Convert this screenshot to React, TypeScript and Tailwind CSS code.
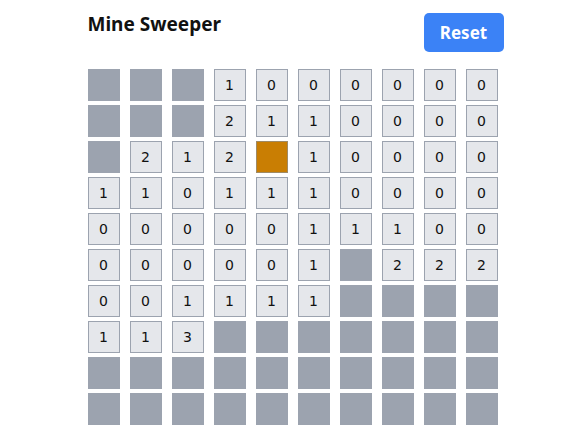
import React from "react";

const rows = [
  "UUU1000000",
  "UUU2110000",
  "U212O10000",
  "1101110000",
  "0000011100",
  "000001U222",
  "001111UUUU",
  "113UUUUUUU",
  "UUUUUUUUUU",
  "UUUUUUUUUU",
];

function Cell({ v }: { v: string }) {
  if (v === "U") {
    return <div className="w-[32px] h-[32px] bg-[#9ca3af]" />;
  }
  if (v === "O") {
    return <div className="w-[32px] h-[32px] bg-[#c97e03] border border-[#9e8a66]" />;
  }
  return (
    <div
      className="w-[32px] h-[32px] bg-[#e5e7eb] border border-[#9ca3af] flex items-center justify-center text-[14px] text-[#111]"
      style={{ fontFamily: '"DejaVu Sans", Verdana, sans-serif' }}
    >
      {v}
    </div>
  );
}

export default function App() {
  return (
    <div className="w-full min-h-[437px] bg-white">
      <div className="w-[410px] mx-auto pt-[11px]">
        <div className="flex justify-between items-start">
          <h1
            className="text-[19px] font-bold leading-[26px] text-[#111]"
            style={{ fontFamily: '"Noto Sans", sans-serif' }}
          >
            Mine Sweeper
          </h1>
          <button
            className="mt-[2px] -mr-[6px] w-[80px] h-[39px] rounded-[5px] bg-[#3b82f6] text-white font-bold text-[17px]"
            style={{ fontFamily: '"Noto Sans", sans-serif' }}
          >
            Reset
          </button>
        </div>
        <div className="mt-[17px] grid grid-cols-[repeat(10,32px)] gap-x-[10px] gap-y-[4px]">
          {rows.map((r, i) =>
            r.split("").map((v, j) => <Cell key={`${i}-${j}`} v={v} />)
          )}
        </div>
      </div>
    </div>
  );
}
